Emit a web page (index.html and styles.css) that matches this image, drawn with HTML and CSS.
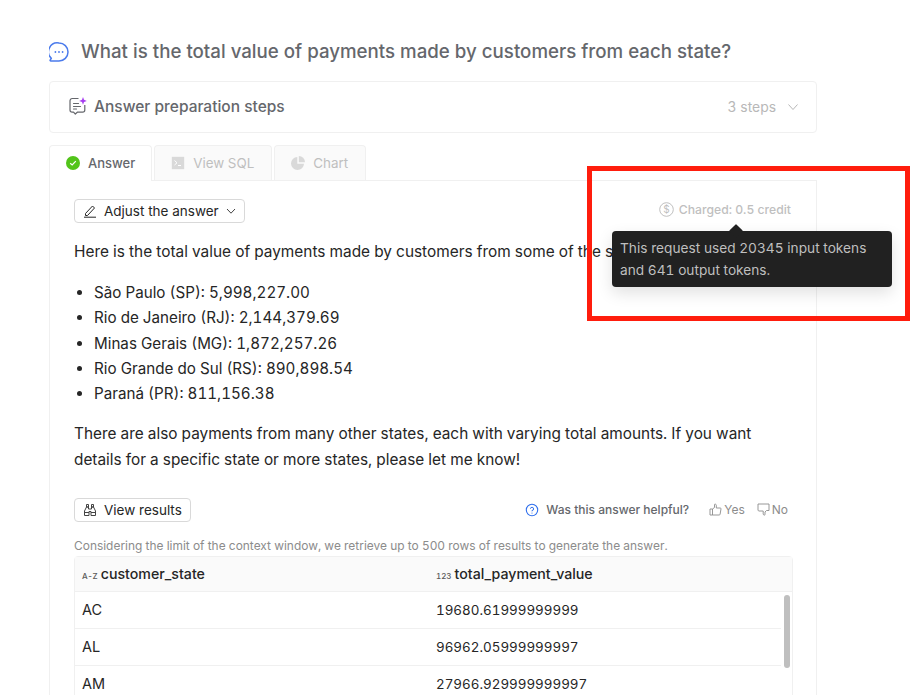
FILE: index.html
```html
<!DOCTYPE html>
<html lang="en">
<head>
<meta charset="utf-8">
<title>Answer</title>
<link rel="stylesheet" href="styles.css">
</head>
<body>
<main class="page">
  <h1 class="question">
    <svg class="q-icon" width="20" height="20" viewBox="0 0 20 20" fill="none"><path d="M10 1a9 9 0 1 1 0 18H1.800c-.6 0-.9-.6-.6-1l1.100-1.600A9 9 0 0 1 10 1Z" stroke="#4b7bec" stroke-width="1.500" stroke-linejoin="round"/><circle cx="6.400" cy="10" r=".9" fill="#4b7bec"/><circle cx="10" cy="10" r=".9" fill="#4b7bec"/><circle cx="13.600" cy="10" r=".9" fill="#4b7bec"/></svg>
    <span>What is the total value of payments made by customers from each state?</span>
  </h1>
  <section class="steps">
    <div class="steps-title">
      <svg width="20" height="20" viewBox="0 0 20 20" fill="none"><path d="M10.500 2.500H4.200C3 2.500 2 3.500 2 4.700V14c0 1.200 1 2.200 2.200 2.200h1.300l1.800 1.800 2-1.800h5.300c1.200 0 2.200-1 2.200-2.200V9" stroke="#65676c" stroke-width="1.200" stroke-linejoin="round"/><path d="M5.500 7.500h5M5.500 10.500h7M5.500 13h3" stroke="#65676c" stroke-width="1.200" stroke-linecap="round"/><path d="M15 1l1 2.800L18.800 5 16 6l-1 2.800L14 6l-2.800-1L14 3.800Z" fill="#a63df0"/></svg>
      <span>Answer preparation steps</span>
    </div>
    <div class="steps-count">
      <span>3 steps</span>
      <svg width="12" height="12" viewBox="0 0 12 12" fill="none"><path d="M1.500 3.500 6 8.500l4.500-5" stroke="#b8b8b8" stroke-width="1"/></svg>
    </div>
  </section>
  <nav class="tabs">
    <div class="tab tab-active">
      <svg width="14" height="14" viewBox="0 0 14 14"><circle cx="7" cy="7" r="7" fill="#52c41a"/><path d="M4.200 7.200 6.200 9l3.600-3.800" stroke="#fff" stroke-width="1.200" fill="none"/></svg>
      <span>Answer</span>
    </div>
    <div class="tab">
      <svg width="14" height="14" viewBox="0 0 14 14"><rect x=".8" y=".8" width="12.400" height="12.400" fill="#d9d9d9"/><path d="M3.500 4.500 6 6.800 3.500 9M7 9.500h3" stroke="#fff" stroke-width="1" fill="none"/></svg>
      <span>View SQL</span>
    </div>
    <div class="tab tab-chart">
      <svg width="14" height="14" viewBox="0 0 14 14"><path d="M6.300 1v6.700H13A6.500 6.500 0 1 1 6.300 1Z" fill="#d9d9d9"/><path d="M7.800 0A6.300 6.300 0 0 1 14 6.200H7.800Z" fill="#d9d9d9"/></svg>
      <span>Chart</span>
    </div>
  </nav>
  <section class="panel">
    <div class="panel-head">
      <button class="btn">
        <svg width="14" height="14" viewBox="0 0 14 14" fill="none"><path d="M2.500 9.500 9.500 2l2 2-7 7.500H2.500Z" stroke="#262626" stroke-width="1" stroke-linejoin="round"/><path d="M1 13.200h12" stroke="#262626" stroke-width="1"/></svg>
        <span>Adjust the answer</span>
        <svg width="10" height="10" viewBox="0 0 10 10" fill="none"><path d="M1 3l4 4.200L9 3" stroke="#434343" stroke-width="1"/></svg>
      </button>
      <div class="charged">
        <svg width="15" height="15" viewBox="0 0 15 15" fill="none"><circle cx="7.500" cy="7.500" r="6.800" stroke="#bfbfbf"/><text x="7.500" y="10.800" text-anchor="middle" class="dollar">$</text></svg>
        <span>Charged: 0.5 credit</span>
      </div>
    </div>
    <p class="para para-first">Here is the total value of payments made by customers from some of the states:</p>
    <ul class="list">
      <li>São Paulo (SP): 5,998,227.00</li>
      <li>Rio de Janeiro (RJ): 2,144,379.69</li>
      <li>Minas Gerais (MG): 1,872,257.26</li>
      <li>Rio Grande do Sul (RS): 890,898.54</li>
      <li>Paraná (PR): 811,156.38</li>
    </ul>
    <p class="para">There are also payments from many other states, each with varying total amounts. If you want details for a specific state or more states, please let me know!</p>
    <div class="actions">
      <button class="btn">
        <svg width="14" height="14" viewBox="0 0 14 14" fill="none" stroke="#434343" stroke-width="1"><path d="M3.500 1.500h2v2.500h-2ZM8.500 1.500h2v2.500h-2ZM3.500 4 1.500 8v4.500h4.500V8.500h2v4h4.500V8L10.500 4H8.500v2h-3V4Z" stroke-linejoin="round"/><path d="M1.500 9.500h4.500M8 9.500h4.500"/></svg>
        <span>View results</span>
      </button>
      <div class="feedback">
        <svg width="14" height="14" viewBox="0 0 14 14" fill="none"><circle cx="7" cy="7" r="5.700" stroke="#2f6fed" stroke-width="1.100"/><path d="M5.400 5.700A1.600 1.600 0 1 1 7 7.500v.8" stroke="#2f6fed" stroke-width="1"/><circle cx="7" cy="10" r=".6" fill="#2f6fed"/></svg>
        <span class="helpful">Was this answer helpful?</span>
        <span class="vote">
          <svg width="13" height="13" viewBox="0 0 13 13" fill="none"><path d="M1 6h2.500v6H1ZM3.500 6l2-1.500V1.500c0-.6 1.800-.6 1.800.8V5h4c.5 0 .8.400.7.900l-.9 5.300c-.1.500-.4.800-.9.800H3.500" stroke="#8c8c8c" stroke-width=".9" stroke-linejoin="round"/></svg>
          Yes
        </span>
        <span class="vote">
          <svg width="13" height="13" viewBox="0 0 13 13" fill="none"><path d="M1 1h11v6.500H9.500L8 9v2.700c0 .6-1.800.6-1.800-.8V8H2c-.5 0-.9-.4-1-.9Z" stroke="#8c8c8c" stroke-width=".9" stroke-linejoin="round"/></svg>
          No
        </span>
      </div>
    </div>
    <p class="note">Considering the limit of the context window, we retrieve up to 500 rows of results to generate the answer.</p>
    <div class="table">
      <div class="row row-head">
        <div class="cell"><span class="type">A-Z</span>customer_state</div>
        <div class="cell"><span class="type">123</span>total_payment_value</div>
      </div>
      <div class="scroll-thumb"></div>
      <div class="row"><div class="cell">AC</div><div class="cell cell-num">19680.61999999999</div></div>
      <div class="row"><div class="cell">AL</div><div class="cell cell-num">96962.05999999997</div></div>
      <div class="row"><div class="cell">AM</div><div class="cell cell-num">27966.929999999997</div></div>
    </div>
  </section>
</main>
<div class="tooltip">
  <div class="tooltip-arrow"></div>
  This request used 20345 input tokens and 641 output tokens.
</div>
<div class="highlight"></div>
</body>
</html>
```
FILE: styles.css
```css
* { box-sizing: border-box; }
html, body { margin: 0; height: 695px; overflow: hidden; background: #fff; }
body { font-family: Inter, "Noto Sans", sans-serif; color: #262626; position: relative; font-variant-numeric: tabular-nums; }
.page { width: 768px; margin-left: 49px; padding-top: 41px; }
.question { display: flex; align-items: center; gap: 12px; margin: 0; height: 21px; font-size: 18.700px; font-weight: 500; color: #65676c; white-space: nowrap; }
.steps { display: flex; justify-content: space-between; align-items: center; height: 52px; margin-top: 19px; padding: 0 17px 0 18px; border: 1px solid #f0f0f0; border-radius: 4px; }
.steps-title { display: flex; align-items: center; gap: 6px; padding-bottom: 2px; font-size: 15.500px; font-weight: 500; color: #65676c; }
.steps-count { display: flex; align-items: center; gap: 11px; font-size: 13.900px; color: #b8b8b8; }
.tabs { display: flex; gap: 2px; height: 35px; margin-top: 12px; }
.tab { display: flex; align-items: center; gap: 8px; padding: 0 17px 0 16px; font-size: 13.400px; color: #bfbfbf; background: #fafafa; border: 1px solid #f0f0f0; border-bottom: 0; border-radius: 4px 4px 0 0; }
.tab-chart { gap: 8px; }
.tab-active { padding: 0 16px 1px; background: #fff; color: #65676c; font-size: 13px; font-weight: 500; position: relative; z-index: 1; height: 36px; }
.panel { border: 1px solid #f0f0f0; border-bottom: 0; padding: 18px 23px 0 24px; height: 520px; overflow: hidden; }
.panel-head { display: flex; justify-content: space-between; align-items: center; }
.btn { display: inline-flex; align-items: center; gap: 7px; height: 24px; padding: 0 8px; border: 1px solid #d9d9d9; border-radius: 4px; background: #fff; font: 13.500px Inter, sans-serif; color: #262626; }
.charged { display: flex; align-items: center; gap: 5px; margin-right: 2px; padding-bottom: 4px; font-size: 12.200px; font-weight: 500; color: #bfbfbf; }
.dollar { font: 10px Inter, sans-serif; fill: #bfbfbf; }
.para { margin: 14.400px 0 0; font-size: 15.360px; line-height: 26px; }
.para-first { margin-top: 16px; font-size: 15.400px; white-space: nowrap; }
.list { margin: 15.100px 0 0; padding-left: 20px; font-size: 15.200px; line-height: 25.200px; }
.actions { display: flex; justify-content: space-between; align-items: center; margin-top: 25px; }
.feedback { display: flex; align-items: center; gap: 7px; margin-right: 5px; font-size: 12px; color: #65676c; }
.helpful { font-weight: 500; margin-right: 13px; }
.vote { display: inline-flex; align-items: center; gap: 2px; color: #8c8c8c; margin-right: 5px; }
.vote:last-child { margin-right: 0; }
.note { margin: 15px 0 0; font-size: 11.950px; line-height: 18px; color: #8c8c8c; }
.table { position: relative; margin-top: 1px; border: 1px solid #f0f0f0; border-radius: 4px 4px 0 0; height: 200px; }
.row { display: grid; grid-template-columns: 354px 353px; height: 37px; margin-right: 11px; border-bottom: 1px solid #f0f0f0; font-size: 14.500px; align-items: center; }
.row-head { height: 35px; margin-right: 0; background: #fafafa; font-size: 14.200px; font-weight: 500; }
.cell { padding-left: 7px; white-space: nowrap; }
.cell-num { font-size: 13.400px; }
.type { font-size: 8px; margin-right: 3px; color: #595959; }
.scroll-thumb { position: absolute; right: 2px; top: 38px; width: 6px; height: 73px; border-radius: 3px; background: #bfbfbf; }
.tooltip { position: absolute; left: 612px; top: 231px; width: 280px; height: 56px; padding: 6px 8px; background: #212121; border-radius: 4px; color: #bfbfbf; font-size: 13.700px; line-height: 22px; box-shadow: 0 6px 16px rgba(0,0,0,.12); }
.tooltip-arrow { position: absolute; left: 119px; top: -5px; width: 10px; height: 10px; background: #212121; transform: rotate(45deg); border-radius: 1px; }
.highlight { position: absolute; left: 587px; top: 166px; width: 323px; height: 155px; border: 5px solid #ff1d0d; }
```
